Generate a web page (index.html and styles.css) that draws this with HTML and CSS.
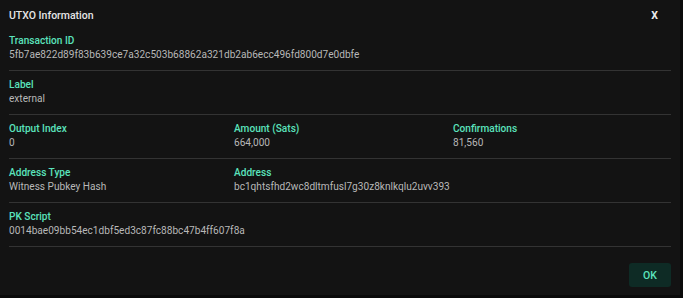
FILE: index.html
```html
<!DOCTYPE html>
<html lang="en">
  <head>
    <meta charset="UTF-8" />
    <meta name="viewport" content="width=device-width,initial-scale=1" />
    <title>UTXO Information</title>
    <link rel="stylesheet" href="styles.css">
  </head>
  <body>
    <div class="dialog">
      <div class="dialog-header">
        <span class="dialog-title">UTXO Information</span>
        <button class="close-btn">X</button>
      </div>
      <div class="dialog-content">
        <div class="section">
          <div class="field">
            <div class="field-label">Transaction ID</div>
            <div class="field-value">5fb7ae822d89f83b639ce7a32c503b68862a321db2ab6ecc496fd800d7e0dbfe</div>
          </div>
        </div>
        <div class="section">
          <div class="field">
            <div class="field-label">Label</div>
            <div class="field-value">external</div>
          </div>
        </div>
        <div class="section cols">
          <div class="field">
            <div class="field-label">Output Index</div>
            <div class="field-value">0</div>
          </div>
          <div class="field">
            <div class="field-label">Amount (Sats)</div>
            <div class="field-value">664,000</div>
          </div>
          <div class="field">
            <div class="field-label">Confirmations</div>
            <div class="field-value">81,560</div>
          </div>
        </div>
        <div class="section cols">
          <div class="field">
            <div class="field-label">Address Type</div>
            <div class="field-value">Witness Pubkey Hash</div>
          </div>
          <div class="field">
            <div class="field-label">Address</div>
            <div class="field-value">bc1qhtsfhd2wc8dltmfusl7g30z8knlkqlu2uvv393</div>
          </div>
        </div>
        <div class="section">
          <div class="field">
            <div class="field-label">PK Script</div>
            <div class="field-value">0014bae09bb54ec1dbf5ed3c87fc88bc47b4ff607f8a</div>
          </div>
        </div>
      </div>
      <div class="dialog-actions">
        <button class="ok-btn">OK</button>
      </div>
    </div>
  </body>
</html>
```

FILE: styles.css
```css
body {
  margin: 0;
  padding: 0;
  background-color: #0a0a0a;
  font-family: Roboto, "Noto Sans", sans-serif;
  color: #bdbdbd;
}

.dialog {
  width: 680px;
  height: 295px;
  box-sizing: border-box;
  background-color: #131313;
  padding: 0 9px;
  display: flex;
  flex-direction: column;
}

.dialog-header {
  display: flex;
  align-items: center;
  justify-content: space-between;
  padding: 9px 0 4px;
  height: 14px;
}

.dialog-title {
  font-size: 10.5px;
  font-weight: 500;
  color: #e6e6e6;
  line-height: 14px;
}

.close-btn {
  background: none;
  border: none;
  padding: 0;
  margin-right: 13px;
  font-family: inherit;
  font-size: 10.5px;
  font-weight: 700;
  color: #ededed;
  line-height: 14px;
  cursor: pointer;
}

.section {
  padding: 7px 0 8px;
  border-bottom: 1px solid #333333;
}

.cols {
  display: grid;
  grid-template-columns: 225px 219px 1fr;
}

.field-label {
  font-size: 10.1px;
  font-weight: 500;
  line-height: 14px;
  color: #5be3bd;
}

.field-value {
  font-size: 10.1px;
  line-height: 14px;
  color: #b8b8b8;
}

.dialog-actions {
  display: flex;
  justify-content: flex-end;
  padding-top: 16px;
}

.ok-btn {
  width: 42px;
  height: 24px;
  border: none;
  border-radius: 3px;
  background-color: #0e2b25;
  color: #5be3bd;
  font-family: inherit;
  font-size: 10.5px;
  font-weight: 500;
  cursor: pointer;
}
```
